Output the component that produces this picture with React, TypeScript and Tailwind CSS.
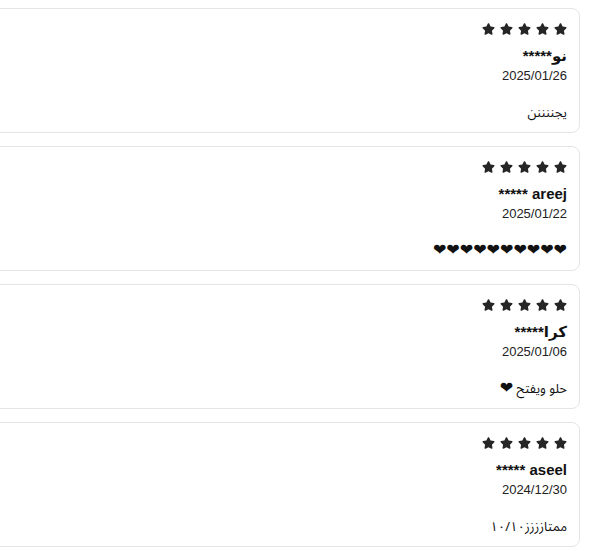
import type { ReactNode } from "react";
import { FaStar } from "react-icons/fa";

const Hearts = ({ n }: { n: number }) => (
  <span className="text-[16px] leading-none">{"❤".repeat(n)}</span>
);

const reviews: { name: string; date: string; body: ReactNode }[] = [
  { name: "نو*****", date: "2025/01/26", body: "يجننننن" },
  { name: "areej *****", date: "2025/01/22", body: <Hearts n={10} /> },
  { name: "كرا*****", date: "2025/01/06", body: <>حلو ويفتح <Hearts n={1} /></> },
  { name: "aseel *****", date: "2024/12/30", body: "ممتازززز١٠/١٠" },
];

function ReviewCard({ name, date, body }: { name: string; date: string; body: ReactNode }) {
  return (
    <div className="-ml-4 mr-[17px] rounded-lg border border-[#e5e5e5] bg-white px-3 pt-[14px] pb-[9px] text-right">
      <div className="flex h-3 items-center justify-start gap-[5px] text-[#262626]">
        {[0, 1, 2, 3, 4].map((i) => (
          <FaStar key={i} className="h-3 w-[13px]" />
        ))}
      </div>
      <p className="mt-[11px] text-[15px] leading-5 font-bold text-[#111]">{name}</p>
      <p className="mt-[2px] text-[13px] leading-4 text-[#222]">{date}</p>
      <p
        className="mt-[19px] h-5 text-[13px] leading-5 text-[#111]"
        style={{ fontFamily: '"Noto Sans Arabic", "Noto Sans Arabic UI", "DejaVu Sans", sans-serif' }}
      >
        {body}
      </p>
    </div>
  );
}

export default function App() {
  return (
    <div
      dir="rtl"
      className="flex h-[555px] w-[597px] flex-col gap-[13px] overflow-hidden bg-white pt-2"
      style={{ fontFamily: '"Liberation Sans", "DejaVu Sans", sans-serif' }}
    >
      {reviews.map((r) => (
        <ReviewCard key={r.date} {...r} />
      ))}
    </div>
  );
}
